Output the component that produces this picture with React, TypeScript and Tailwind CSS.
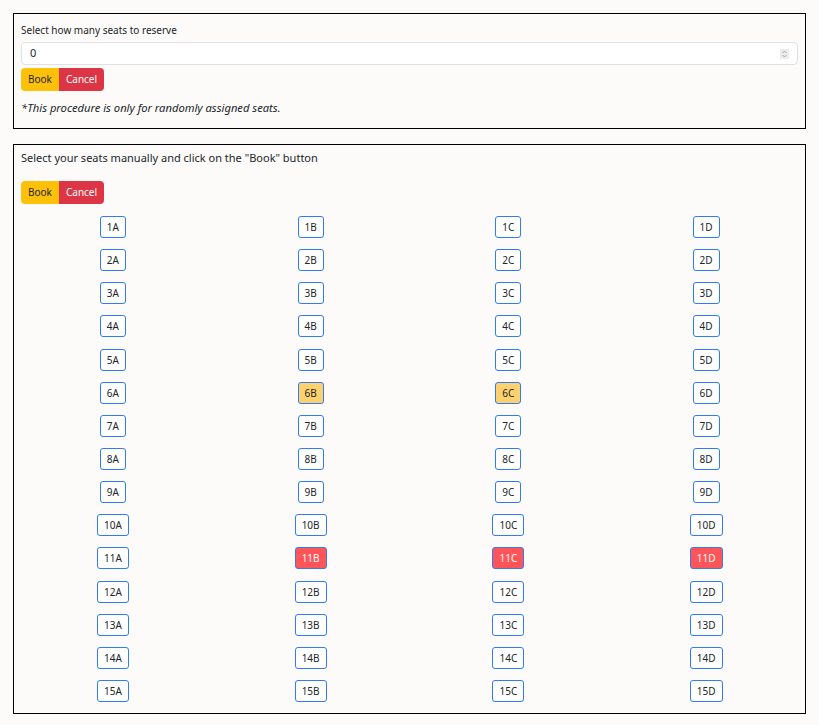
import React from 'react'

const rows = Array.from({ length: 15 }, (_, i) => i + 1)
const cols = ['A', 'B', 'C', 'D']

const held = ['6B', '6C']
const taken = ['11B', '11C', '11D']

const font = { fontFamily: '"Noto Sans", "Open Sans", sans-serif' }

function Seat({ id }: { id: string }) {
  let tone = 'bg-white text-[#212529]'
  if (held.includes(id)) tone = 'bg-[#fdd26e] text-[#212529]'
  if (taken.includes(id)) tone = 'bg-[#ff5558] text-white'
  return (
    <button className={`h-[22px] px-[6px] border border-[#2f7cf6] rounded-[3px] text-[10px] leading-none ${tone}`}>
      {id}
    </button>
  )
}

function ButtonGroup() {
  return (
    <div className="flex">
      <button className="h-[23px] px-[7px] bg-[#ffc107] text-[#212529] text-[10px] rounded-l-[4px]">Book</button>
      <button className="h-[23px] px-[7px] bg-[#dc3545] text-white text-[10px] rounded-r-[4px]">Cancel</button>
    </div>
  )
}

export default function App() {
  return (
    <div className="min-h-[725px] bg-[#fcfbfa] p-[13px] text-[#212529]" style={font}>
      <div className="border border-black px-[7px] pt-[9px] pb-[12px]">
        <div className="text-[10px] leading-[14px] mb-[5px]">Select how many seats to reserve</div>
        <div className="relative h-[23px] border border-[#dee2e6] rounded-[4px] bg-white flex items-center pl-[8px] text-[11px]">
          0
          <span className="absolute right-[8px] top-[6px] w-[9px] h-[10px] bg-[#ececec] flex items-center justify-center">
            <svg width="7" height="8" viewBox="0 0 7 8" fill="none" stroke="#9a9a9a" strokeWidth="0.9">
              <path d="M1.5 3 L3.5 1 L5.5 3" />
              <path d="M1.5 5 L3.5 7 L5.5 5" />
            </svg>
          </span>
        </div>
        <div className="mt-[3px]">
          <ButtonGroup />
        </div>
        <div className="mt-[9px] text-[11.2px] italic leading-[16px]">*This procedure is only for randomly assigned seats.</div>
      </div>

      <div className="mt-[15px] border border-black pt-[5px] pb-[11px]">
        <div className="px-[7px] text-[11px] leading-[16px]">Select your seats manually and click on the "Book" button</div>
        <div className="px-[7px] mt-[15px]">
          <ButtonGroup />
        </div>
        <div className="mt-[12px] grid grid-cols-4 gap-y-[11.15px]">
          {rows.map((r) =>
            cols.map((c) => (
              <div key={`${r}${c}`} className="flex justify-center">
                <Seat id={`${r}${c}`} />
              </div>
            ))
          )}
        </div>
      </div>
    </div>
  )
}
